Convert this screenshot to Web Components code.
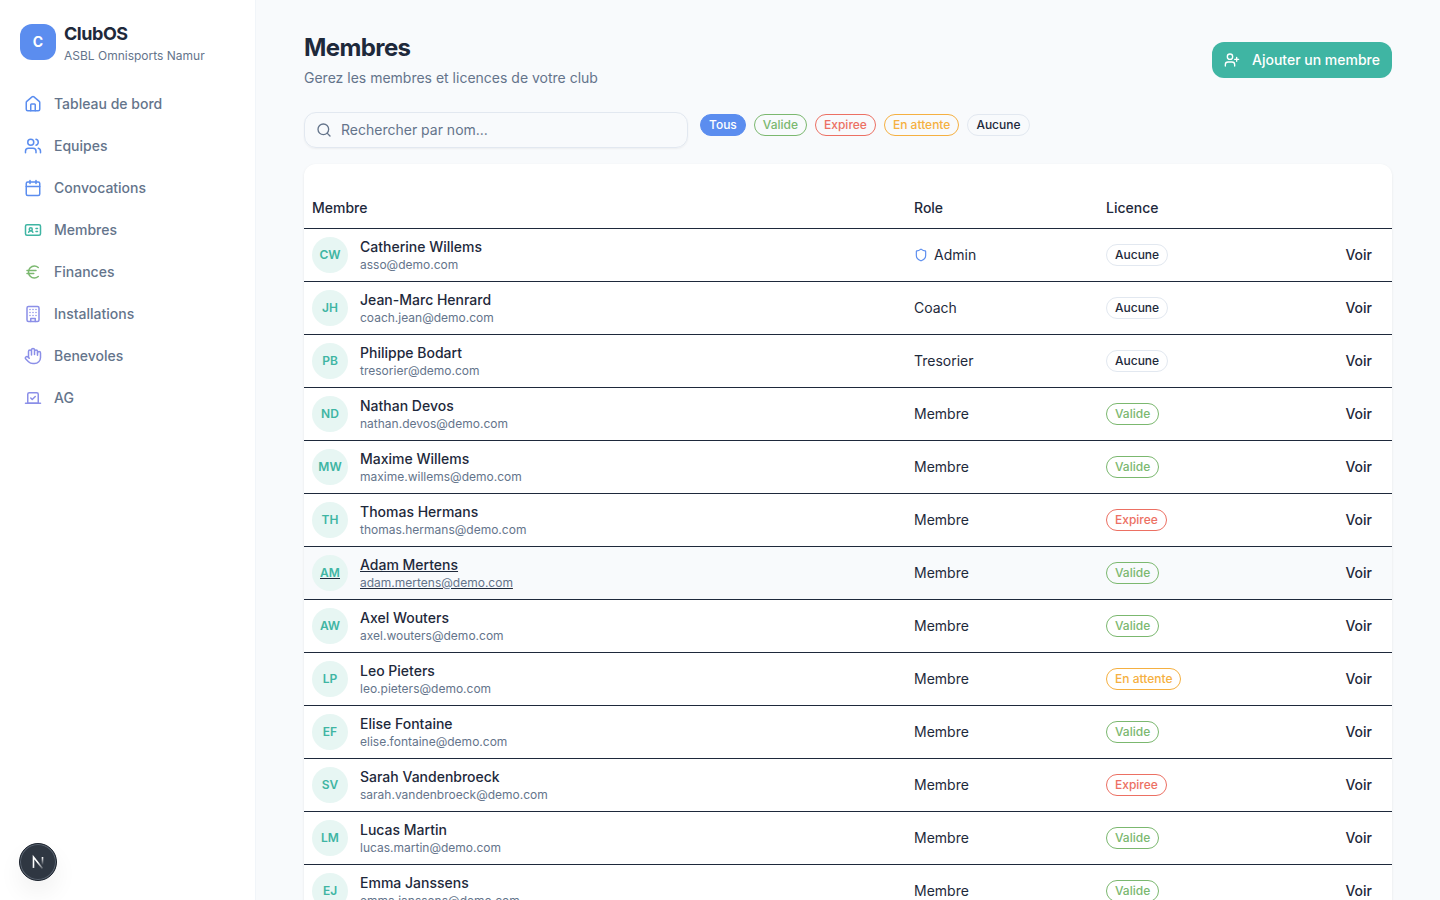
<!DOCTYPE html>
<html lang="fr">
<head>
<meta charset="utf-8">
<meta name="viewport" content="width=device-width, initial-scale=1">
<title>ClubOS - Membres</title>
<style>
:root {
    --ink: #1e293b;
    --muted: #64748b;
    --line: #e2e8f0;
    --surface: #f8fafc;
    --blue: #5b8def;
    --teal: #3fb5a3;
    --green: #7bb86f;
    --red: #ec7063;
    --orange: #f5b041;
    --violet: #8b8fe8;
}
body {
    margin: 0;
    background: var(--surface);
    color: var(--ink);
    font-family: Inter, "Liberation Sans", sans-serif;
    font-size: 14px;
    line-height: 20px;
    -webkit-font-smoothing: antialiased;
}
</style>
</head>
<body>
<club-app></club-app>

<script>
//#region Icons
const icons = {
    home: '<path d="M15 21v-8a1 1 0 0 0-1-1h-4a1 1 0 0 0-1 1v8"/><path d="M3 10a2 2 0 0 1 .709-1.528l7-5.999a2 2 0 0 1 2.582 0l7 5.999A2 2 0 0 1 21 10v9a2 2 0 0 1-2 2H5a2 2 0 0 1-2-2z"/>',
    users: '<path d="M16 21v-2a4 4 0 0 0-4-4H6a4 4 0 0 0-4 4v2"/><circle cx="9" cy="7" r="4"/><path d="M22 21v-2a4 4 0 0 0-3-3.87"/><path d="M16 3.13a4 4 0 0 1 0 7.75"/>',
    calendar: '<path d="M8 2v4M16 2v4"/><rect width="18" height="18" x="3" y="4" rx="2"/><path d="M3 10h18"/>',
    card: '<rect x="2" y="5" width="20" height="14" rx="2"/><circle cx="9" cy="11" r="2"/><path d="M6.170 15a3 3 0 0 1 5.660 0M16 10h2M16 14h2"/>',
    euro: '<path d="M4 10h12M4 14h9"/><path d="M19 6a7.7 7.7 0 0 0-5.2-2A7.9 7.9 0 0 0 6 12c0 4.4 3.5 8 7.8 8 2 0 3.8-.8 5.2-2"/>',
    building: '<rect width="16" height="20" x="4" y="2" rx="2"/><path d="M9 22v-4h6v4M8 6h.01M16 6h.01M12 6h.01M12 10h.01M12 14h.01M16 10h.01M16 14h.01M8 10h.01M8 14h.01"/>',
    hand: '<path d="M18 11V6a2 2 0 0 0-4 0M14 10V4a2 2 0 0 0-4 0v2M10 10.500V6a2 2 0 0 0-4 0v8"/><path d="M18 8a2 2 0 1 1 4 0v6a8 8 0 0 1-8 8h-2c-2.800 0-4.500-.860-5.990-2.340l-3.600-3.600a2 2 0 0 1 2.830-2.820L7 15"/>',
    vote: '<path d="m9 12 2 2 4-4"/><path d="M5 7c0-1.100.9-2 2-2h10a2 2 0 0 1 2 2v12H5V7Z"/><path d="M22 19H2"/>',
    shield: '<path d="M20 13c0 5-3.500 7.500-7.660 8.950a1 1 0 0 1-.670-.010C7.500 20.500 4 18 4 13V6a1 1 0 0 1 1-1c2 0 4.500-1.200 6.240-2.720a1.170 1.170 0 0 1 1.520 0C14.510 3.810 17 5 19 5a1 1 0 0 1 1 1z"/>',
    search: '<circle cx="11" cy="11" r="8"/><path d="m21 21-4.300-4.300"/>',
    userPlus: '<path d="M16 21v-2a4 4 0 0 0-4-4H6a4 4 0 0 0-4 4v2"/><circle cx="9" cy="7" r="4"/><path d="M19 8v6M22 11h-6"/>'
}
//#endregion

const menu = [
    ['home', 'Tableau de bord', 'blue'],
    ['users', 'Equipes', 'blue'],
    ['calendar', 'Convocations', 'blue'],
    ['card', 'Membres', 'teal'],
    ['euro', 'Finances', 'green'],
    ['building', 'Installations', 'violet'],
    ['hand', 'Benevoles', 'violet'],
    ['vote', 'AG', 'violet']
]

const members = [
    ['Catherine Willems', 'asso', 'Admin', 'Aucune'],
    ['Jean-Marc Henrard', 'coach.jean', 'Coach', 'Aucune'],
    ['Philippe Bodart', 'tresorier', 'Tresorier', 'Aucune'],
    ['Nathan Devos', 'nathan.devos', 'Membre', 'Valide'],
    ['Maxime Willems', 'maxime.willems', 'Membre', 'Valide'],
    ['Thomas Hermans', 'thomas.hermans', 'Membre', 'Expiree'],
    ['Adam Mertens', 'adam.mertens', 'Membre', 'Valide'],
    ['Axel Wouters', 'axel.wouters', 'Membre', 'Valide'],
    ['Leo Pieters', 'leo.pieters', 'Membre', 'En attente'],
    ['Elise Fontaine', 'elise.fontaine', 'Membre', 'Valide'],
    ['Sarah Vandenbroeck', 'sarah.vandenbroeck', 'Membre', 'Expiree'],
    ['Lucas Martin', 'lucas.martin', 'Membre', 'Valide'],
    ['Emma Janssens', 'emma.janssens', 'Membre', 'Valide']
]

const tones = { 'Valide': 'green', 'Expiree': 'red', 'En attente': 'orange' }

function render(element, html) {
    const template = document.createElement('template')
    template.innerHTML = html
    element.attachShadow({mode: 'open'}).appendChild(template.content.cloneNode(true))
}

class ClubIcon extends HTMLElement {
    connectedCallback() {
        if (this.shadowRoot) return
        render(this, `
<style>
:host { display: block; flex: none; width: var(--icon-size, 18px); height: var(--icon-size, 18px); }
svg { display: block; width: 100%; height: 100%; }
</style>
<svg viewBox="0 0 24 24" fill="none" stroke="currentColor" stroke-width="2" stroke-linecap="round" stroke-linejoin="round" aria-hidden="true">${icons[this.getAttribute('name')]}</svg>`)
    }
}

class ClubBadge extends HTMLElement {
    connectedCallback() {
        if (this.shadowRoot) return
        render(this, `
<style>
:host {
    display: inline-flex;
    box-sizing: border-box;
    height: 22px;
    padding: 0 8px;
    align-items: center;
    border: 1px solid var(--line);
    border-radius: 11px;
    font-size: 12px;
    line-height: 16px;
    font-weight: 500;
    white-space: nowrap;
}
:host([tone=green]) { color: var(--green); border-color: var(--green); }
:host([tone=red]) { color: var(--red); border-color: var(--red); }
:host([tone=orange]) { color: var(--orange); border-color: var(--orange); }
:host([tone=solid]) { color: #fff; background: var(--blue); border-color: var(--blue); }
</style>
<slot></slot>`)
    }
}

class ClubSidebar extends HTMLElement {
    connectedCallback() {
        if (this.shadowRoot) return
        render(this, `
<style>
:host {
    display: flex;
    flex-direction: column;
    box-sizing: border-box;
    background: #fff;
    border-right: 1px solid #f1f5f9;
}
.brand { display: flex; align-items: center; gap: 8px; padding: 20px; }
.logo {
    display: grid;
    place-items: center;
    width: 36px;
    height: 36px;
    border-radius: 12px;
    background: var(--blue);
    color: #fff;
    font-weight: 700;
}
.name { font-size: 18px; line-height: 28px; font-weight: 700; letter-spacing: -0.025em; }
.club { font-size: 12px; line-height: 16px; color: var(--muted); }
nav { display: grid; gap: 2px; padding: 0 12px; }
a {
    display: flex;
    align-items: center;
    gap: 12px;
    padding: 10px 12px;
    color: var(--muted);
    font-weight: 500;
    text-decoration: none;
}
</style>
<div class="brand">
    <div class="logo">C</div>
    <div>
        <div class="name">ClubOS</div>
        <div class="club">ASBL Omnisports Namur</div>
    </div>
</div>
<nav aria-label="Menu">
    ${menu.map(([icon, label, color]) => `<a href="#"><club-icon name="${icon}" style="color: var(--${color})"></club-icon>${label}</a>`).join('')}
</nav>`)
    }
}

class MemberToolbar extends HTMLElement {
    connectedCallback() {
        if (this.shadowRoot) return
        render(this, `
<style>
:host { display: flex; align-items: flex-start; gap: 12px; }
label {
    display: flex;
    align-items: center;
    gap: 9px;
    box-sizing: border-box;
    flex: 0 1 384px;
    height: 36px;
    padding: 0 11px;
    border: 1px solid var(--line);
    border-radius: 12px;
    box-shadow: 0 1px 2px rgb(0 0 0 / 5%);
    color: var(--muted);
    --icon-size: 16px;
}
input {
    flex: 1;
    min-width: 0;
    padding: 0;
    border: 0;
    outline: none;
    background: none;
    font: inherit;
    color: var(--ink);
}
input::placeholder { color: var(--muted); opacity: 1; }
.filters { display: flex; flex-wrap: wrap; gap: 8px; padding-top: 2px; }
button { display: flex; padding: 0; border: 0; background: none; font: inherit; color: inherit; cursor: pointer; }
</style>
<label>
    <club-icon name="search"></club-icon>
    <input type="text" placeholder="Rechercher par nom..." aria-label="Rechercher par nom">
</label>
<div class="filters">
    <button type="button"><club-badge tone="solid">Tous</club-badge></button>
    ${['Valide', 'Expiree', 'En attente', 'Aucune'].map(s => `<button type="button"><club-badge tone="${tones[s] || ''}">${s}</club-badge></button>`).join('')}
</div>`)
    }
}

class MemberTable extends HTMLElement {
    connectedCallback() {
        if (this.shadowRoot) return
        render(this, `
<style>
:host {
    display: block;
    padding-top: 24px;
    border-radius: 12px;
    background: #fff;
    box-shadow: 0 1px 3px rgb(0 0 0 / 8%);
}
table { width: 100%; table-layout: fixed; border-collapse: separate; border-spacing: 0; }
th, td { box-sizing: border-box; padding: 0 8px; border-bottom: 1px solid var(--ink); text-align: left; vertical-align: middle; }
th { height: 41px; font-weight: 500; }
td { height: 53px; }
.role, .licence { width: 192px; }
.action { width: 102px; text-align: right; }
.member { display: flex; width: fit-content; align-items: center; gap: 12px; color: inherit; text-decoration: none; }
.avatar {
    display: grid;
    place-items: center;
    width: 36px;
    height: 36px;
    border-radius: 50%;
    background: #e7f6f3;
    color: var(--teal);
    font-size: 12px;
    line-height: 16px;
    font-weight: 600;
}
.name { display: block; line-height: 20px; font-weight: 500; }
.email { display: block; font-size: 12px; line-height: 16px; color: var(--muted); }
.active td { background: var(--surface); }
.active .member { text-decoration: underline; }
.active .avatar span { text-decoration: underline var(--ink); }
.with-icon { display: flex; align-items: center; gap: 6px; --icon-size: 14px; }
.with-icon club-icon { color: var(--blue); }
club-badge { vertical-align: middle; }
button { padding: 6px 12px; border: 0; background: none; color: inherit; font: inherit; font-weight: 500; cursor: pointer; }
</style>
<table>
    <thead>
        <tr><th>Membre</th><th class="role">Role</th><th class="licence">Licence</th><th class="action"></th></tr>
    </thead>
    <tbody>${members.map(m => this.row(m)).join('')}</tbody>
</table>`)
    }

    row([name, user, role, licence]) {
        const initials = name.split(' ').map(w => w[0]).join('')
        const roleHtml = role === 'Admin' ? `<div class="with-icon"><club-icon name="shield"></club-icon>${role}</div>` : role
        return `
<tr class="${name === 'Adam Mertens' ? 'active' : ''}">
    <td><a class="member" href="#"><span class="avatar"><span>${initials}</span></span><span><span class="name">${name}</span><span class="email">${user}@demo.com</span></span></a></td>
    <td>${roleHtml}</td>
    <td><club-badge tone="${tones[licence] || ''}">${licence}</club-badge></td>
    <td class="action"><button type="button">Voir</button></td>
</tr>`
    }
}

class DevBadge extends HTMLElement {
    connectedCallback() {
        if (this.shadowRoot) return
        render(this, `
<style>
:host { display: block; }
button {
    display: grid;
    place-items: center;
    box-sizing: border-box;
    width: 38px;
    height: 38px;
    padding: 0;
    border: 1px solid #1b222d;
    border-radius: 50%;
    background: #2f3742;
    box-shadow: inset 0 0 0 1px #5b6572, 0 12px 24px rgb(0 0 0 / 6%);
    cursor: pointer;
}
svg { display: block; }
</style>
<button type="button" aria-label="Outils">
    <svg width="16" height="16" viewBox="0 0 16 16" fill="none" stroke-width="1.600">
        <defs>
            <linearGradient id="diag" gradientUnits="userSpaceOnUse" x1="8" y1="8" x2="13" y2="14"><stop stop-color="#fff"/><stop offset="1" stop-color="#fff" stop-opacity=".2"/></linearGradient>
            <linearGradient id="side" gradientUnits="userSpaceOnUse" x1="12" y1="3" x2="12" y2="11"><stop stop-color="#fff"/><stop offset="1" stop-color="#fff" stop-opacity="0"/></linearGradient>
        </defs>
        <path d="M3.500 14V3L12.500 14.500" stroke="url(#diag)"/>
        <path d="M12.500 3v8" stroke="url(#side)"/>
    </svg>
</button>`)
    }
}

class ClubApp extends HTMLElement {
    connectedCallback() {
        if (this.shadowRoot) return
        render(this, `
<style>
:host { display: grid; grid-template-columns: 256px minmax(0, 1fr); height: 100vh; }
main { overflow-y: auto; scrollbar-width: none; padding: 32px 48px; }
header { display: flex; align-items: center; justify-content: space-between; margin-bottom: 24px; }
h1 { margin: 0 0 4px; font-size: 24px; line-height: 32px; font-weight: 700; letter-spacing: -0.025em; }
p { margin: 0; color: var(--muted); }
.add {
    display: flex;
    align-items: center;
    gap: 12px;
    height: 36px;
    padding: 0 12px;
    border: 0;
    border-radius: 12px;
    background: var(--teal);
    color: #fff;
    font: inherit;
    font-weight: 500;
    cursor: pointer;
    --icon-size: 16px;
}
member-toolbar { margin-bottom: 16px; }
dev-badge { position: absolute; left: 19px; bottom: 19px; }
</style>
<club-sidebar></club-sidebar>
<main>
    <header>
        <div>
            <h1>Membres</h1>
            <p>Gerez les membres et licences de votre club</p>
        </div>
        <button class="add" type="button"><club-icon name="userPlus"></club-icon>Ajouter un membre</button>
    </header>
    <member-toolbar></member-toolbar>
    <member-table></member-table>
</main>
<dev-badge></dev-badge>`)
    }
}

window.customElements.define('club-icon', ClubIcon)
window.customElements.define('club-badge', ClubBadge)
window.customElements.define('club-sidebar', ClubSidebar)
window.customElements.define('member-toolbar', MemberToolbar)
window.customElements.define('member-table', MemberTable)
window.customElements.define('dev-badge', DevBadge)
window.customElements.define('club-app', ClubApp)
</script>
</body>
</html>
